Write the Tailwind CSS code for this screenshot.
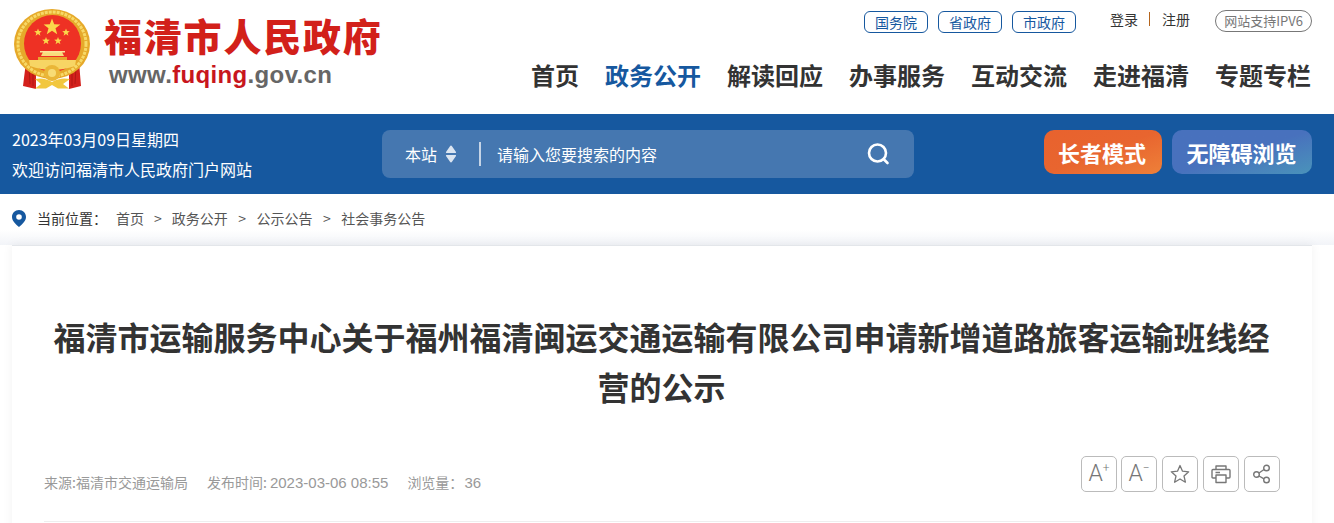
<!DOCTYPE html>
<html>

<head>
    <meta charset="utf-8">
    <title>福清市人民政府</title>
    <script src="https://cdn.jsdelivr.net/npm/@tailwindcss/browser@4"></script>
</head>

<body class="m-0 h-[523px] overflow-hidden bg-white font-['Noto_Sans_CJK_SC','Noto_Sans',sans-serif] text-[#333]">
    <!-- 头部 -->
    <header class="h-[114px] flex justify-between pl-[14px] pr-[22px]">
        <div class="flex">
            <svg class="w-[77px] h-[81px] mt-[9px]" viewBox="14 9 77 81">
                <path d="M26 62 L36 72 L36 89 L23 86 Z M79 62 L69 72 L69 89 L81 86 Z" fill="#d3201c" />
                <path d="M29 66 L30 84 M33 70 L33 86 M76 66 L75 84 M72 70 L72 86" stroke="#a81512" stroke-width="0.800" />
                <ellipse cx="52" cy="44" rx="38" ry="35" fill="#e6a92a" />
                <ellipse cx="52" cy="44" rx="34" ry="32" fill="none" stroke="#f7d967" stroke-width="3" stroke-dasharray="3 1" />
                <circle cx="52.500" cy="43.500" r="28.500" fill="#ee3124" />
                <path d="M29 60 H76 L75 66 Q52 74 30 66 Z" fill="#f7d564" />
                <path d="M41 56 L43 52 H62 L64 56 Z" fill="#f9dc7c" />
                <path d="M38 60 V57 H67 V60 Z" fill="#e9a62c" />
                <path d="M40 51 H65 V52.500 H40 Z" fill="#fbe59a" />
                <polygon fill="#fbd84b" points="52,18.500 54.200,24.300 60.400,24.500 55.500,28.300 57.200,34.200 52,30.800 46.800,34.200 48.500,28.300 43.600,24.500 49.800,24.300" />
                <polygon fill="#fbd84b" points="38,28.500 39,31.100 41.800,31.200 39.600,33 40.400,35.700 38,34.100 35.600,35.700 36.400,33 34.200,31.200 37,31.100" />
                <polygon fill="#fbd84b" points="66,28.500 67,31.100 69.800,31.200 67.600,33 68.400,35.700 66,34.100 63.600,35.700 64.400,33 62.200,31.200 65,31.100" />
                <polygon fill="#fbd84b" points="46,37 47,39.600 49.800,39.700 47.600,41.500 48.400,44.200 46,42.600 43.600,44.200 44.400,41.500 42.200,39.700 45,39.600" />
                <polygon fill="#fbd84b" points="58,37 59,39.600 61.800,39.700 59.600,41.500 60.400,44.200 58,42.600 55.600,44.200 56.400,41.500 54.200,39.700 57,39.600" />
                <circle cx="52" cy="73" r="8" fill="#eab637" />
                <circle cx="52" cy="73" r="4" fill="#f8dc75" />
                <path d="M35 79 Q44 77 52 82 Q60 77 70 79 L63 84 L69 88.500 H58 L52 85 L46 88.500 H35 L41 84 Z" fill="#f2c73f" />
            </svg>
            <div class="ml-[13px]">
                <div class="mt-[8px] h-[54px] text-[#d2201a] text-[38px] leading-[54px] font-black tracking-[1.8px] whitespace-nowrap font-['Noto_Sans_CJK_SC',serif]">福清市人民政府</div>
                <div class="ml-[5px] text-[24px] leading-[26px] font-bold tracking-[0.350px] text-[#666] font-['Liberation_Sans',sans-serif] whitespace-nowrap">www.<span class="text-[#c8161d]">fuqing</span>.gov.cn</div>
            </div>
        </div>
        <div class="flex flex-col items-end">
            <div class="flex items-center mt-[10px] h-[23px] text-sm">
                <a class="w-[64px] h-[22px] flex items-center justify-center border border-[#16589f] rounded-[6px] text-[#16589f] text-[14px]">国务院</a>
                <a class="ml-[10px] w-[64px] h-[22px] flex items-center justify-center border border-[#16589f] rounded-[6px] text-[#16589f] text-[14px]">省政府</a>
                <a class="ml-[10px] w-[64px] h-[22px] flex items-center justify-center border border-[#16589f] rounded-[6px] text-[#16589f] text-[14px]">市政府</a>
                <a class="ml-[34px] -mt-[6px] text-[14px]">登录</a>
                <span class="ml-[11px] -mt-[5px] w-[1px] h-[14px] bg-[#b5651d]"></span>
                <a class="ml-[12px] -mt-[6px] text-[14px]">注册</a>
                <span class="ml-[25px] w-[97px] h-[22px] -mt-[1px] flex items-center justify-center border border-[#777] rounded-full text-[#777] text-[13px] whitespace-nowrap">网站支持IPV6</span>
            </div>
            <nav class="flex gap-[26px] mt-[24px] mr-[1px] text-[24px] leading-[36px] font-bold">
                <a>首页</a>
                <a class="text-[#16589f]">政务公开</a>
                <a>解读回应</a>
                <a>办事服务</a>
                <a>互动交流</a>
                <a>走进福清</a>
                <a>专题专栏</a>
            </nav>
        </div>
    </header>

    <!-- 蓝色搜索栏 -->
    <div class="h-[80px] bg-[#16589f] flex items-center pl-[12px] pr-[22px] text-white">
        <div class="w-[370px] text-[16px] leading-[30px]">
            <div>2023年03月09日星期四</div>
            <div>欢迎访问福清市人民政府门户网站</div>
        </div>
        <div class="w-[532px] h-[48px] rounded-[8px] bg-[#4577b0] flex items-center text-[16px]">
            <span class="ml-[23px]">本站</span>
            <svg class="ml-[7px] w-[14px] h-[20px]" viewBox="0 0 14 20" fill="#dbe5f1">
                <path d="M7 1.500 Q7.600 1.500 8 2.200 L12 8 Q12.400 9 11.400 9 H2.600 Q1.600 9 2 8 L6 2.200 Q6.400 1.500 7 1.500 Z M7 18.500 Q7.600 18.500 8 17.800 L12 12 Q12.400 11 11.400 11 H2.600 Q1.600 11 2 12 L6 17.800 Q6.400 18.500 7 18.500 Z" />
            </svg>
            <span class="ml-[21px] w-[2px] h-[24px] bg-[#c5d4e6]"></span>
            <span class="ml-[16px] flex-1">请输入您要搜索的内容</span>
            <svg class="mr-[24px] w-[24px] h-[24px]" viewBox="0 0 24 24" fill="none" stroke="white" stroke-width="2.600" stroke-linecap="round">
                <circle cx="11.500" cy="11" r="8.500" />
                <path d="M18 17.500 L21.500 21" />
            </svg>
        </div>
        <div class="ml-[130px] w-[118px] h-[44px] -mt-[4px] pr-[2px] rounded-[10px] bg-gradient-to-br from-[#e8622e] via-[#e8652f] to-[#ee8039] flex items-center justify-center text-[22px] font-bold">长者模式</div>
        <div class="ml-[10px] w-[140px] h-[44px] -mt-[4px] pr-[1px] rounded-[10px] bg-gradient-to-br from-[#4871bd] via-[#4871bd] to-[#4a93ba] flex items-center justify-center text-[22px] font-bold">无障碍浏览</div>
    </div>

    <!-- 面包屑 -->
    <div class="h-[51px] pl-[12px] pb-[3px] flex items-center text-[14px] bg-gradient-to-b from-white from-70% to-[#f2f4f8]">
        <svg class="w-[14px] h-[17px]" viewBox="0 0 14 17">
            <path fill-rule="evenodd" fill="#16589f" d="M7 0 C11 0 14 3 14 7 C14 11 10 14.500 7 17 C4 14.500 0 11 0 7 C0 3 3 0 7 0 Z M7 4.200 A2.800 2.800 0 1 0 7 9.800 A2.800 2.800 0 1 0 7 4.200 Z" />
        </svg>
        <span class="ml-[11px] w-[79px]">当前位置：</span>
        <span class="text-[#555]">首页</span>
        <span class="mx-[10px] text-[#555]">&gt;</span>
        <span class="text-[#555]">政务公开</span>
        <span class="mx-[10.500px] text-[#555]">&gt;</span>
        <span class="text-[#555]">公示公告</span>
        <span class="mx-[10.500px] text-[#555]">&gt;</span>
        <span class="text-[#555]">社会事务公告</span>
    </div>

    <!-- 正文卡片 -->
    <main class="mx-[22px] ml-[12px] h-[300px] border-t border-[#e3e6ea] bg-white px-[32px] shadow-[0_0_10px_rgba(0,0,0,0.06)]">
        <h1 class="mt-[65px] -ml-[1px] text-center text-[32px] leading-[50px] font-bold">福清市运输服务中心关于福州福清闽运交通运输有限公司申请新增道路旅客运输班线经营的公示</h1>
        <div class="mt-[45px] h-[66px] flex justify-between border-b border-[#eee]">
            <div class="mt-[14px] flex gap-[19px] h-[24px] text-[14px] leading-[24px] text-[#999]">
                <span>来源:福清市交通运输局</span>
                <span>发布时间: <span class="text-[15px] font-['Liberation_Sans',sans-serif]">2023-03-06 08:55</span></span>
                <span>浏览量：<span class="ml-[1px] text-[15px] font-['Liberation_Sans',sans-serif]">36</span></span>
            </div>
            <div class="flex h-[36px]">
                <span class="w-[36px] h-[36px] flex items-center justify-center border border-[#bbb] rounded-[5px] text-[#777] text-[23px] font-light font-['Roboto',sans-serif]">A<sup class="text-[12px]">+</sup></span>
                <span class="ml-[4px] w-[36px] h-[36px] flex items-center justify-center border border-[#bbb] rounded-[5px] text-[#777] text-[23px] font-light font-['Roboto',sans-serif]">A<sup class="text-[12px]">−</sup></span>
                <span class="ml-[5px] w-[36px] h-[36px] flex items-center justify-center border border-[#bbb] rounded-[5px]">
                    <svg class="w-[20px] h-[20px]" viewBox="0 0 20 20" fill="none" stroke="#777" stroke-width="1.300" stroke-linejoin="round">
                        <path d="M10 1.500 L12.500 7.200 L18.700 7.800 L14 12 L15.400 18.200 L10 15 L4.600 18.200 L6 12 L1.300 7.800 L7.500 7.200 Z" />
                    </svg>
                </span>
                <span class="ml-[5px] w-[36px] h-[36px] flex items-center justify-center border border-[#bbb] rounded-[5px]">
                    <svg class="w-[20px] h-[20px]" viewBox="0 0 20 20" fill="none" stroke="#777" stroke-width="1.400" stroke-linejoin="round">
                        <path d="M5 5.500 V2 H15 V5.500 M5 14 H2 Q1 14 1 13 V6.500 Q1 5.500 2 5.500 H18 Q19 5.500 19 6.500 V13 Q19 14 18 14 H15 M5 11 H15 V18.500 H5 Z M4.500 8.500 H9" />
                    </svg>
                </span>
                <span class="ml-[5px] w-[36px] h-[36px] flex items-center justify-center border border-[#bbb] rounded-[5px]">
                    <svg class="w-[20px] h-[20px]" viewBox="0 0 20 20" fill="none" stroke="#777" stroke-width="1.400">
                        <circle cx="14.500" cy="4" r="2.800" />
                        <circle cx="4.500" cy="10.500" r="2.800" />
                        <circle cx="14.500" cy="16" r="2.800" />
                        <path d="M12 5.500 L7 9 M7 12 L12 14.800" />
                    </svg>
                </span>
            </div>
        </div>
    </main>
</body>

</html>
